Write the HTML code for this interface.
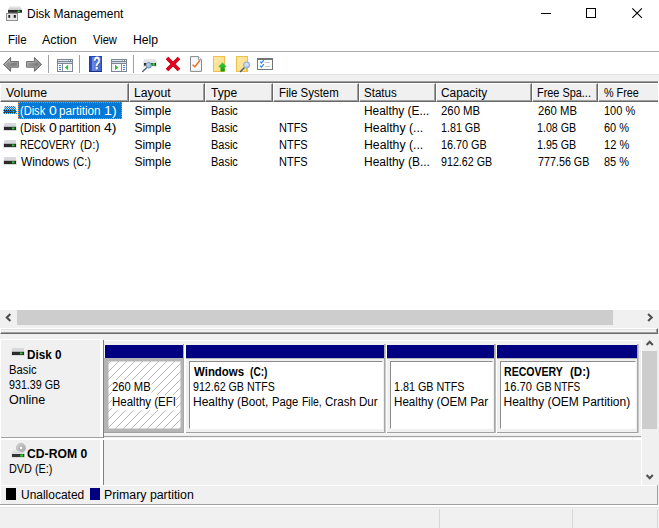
<!DOCTYPE html>
<html><head><meta charset="utf-8"><title>Disk Management</title>
<style>
*{box-sizing:border-box;margin:0;padding:0}
html,body{width:659px;height:528px;overflow:hidden;background:#fff}
body{position:relative;font-family:"Liberation Sans",sans-serif;font-size:12px;color:#000;line-height:15px}
.a{position:absolute}
.t{position:absolute;white-space:pre;transform-origin:0 0;height:15px}
.b{font-weight:bold}
.hc{position:absolute;top:83px;height:19px;background:#f0f0f0;border-top:1px solid #fff;border-left:1px solid #fff;border-bottom:1px solid #696969;border-right:1px solid #696969}
.hc:after{content:"";position:absolute;left:0;top:0;right:0;bottom:0;border-right:1px solid #a0a0a0;border-bottom:1px solid #a0a0a0}
.bar{position:absolute;top:345px;height:13px;background:#000080}
.pb{position:absolute;top:361px;height:68px;background:#fff;border:1px solid #8c8c8c;border-right-color:#fff;border-bottom-color:#fff}
.hl{border-right:none}.hl:after{border-right:none}
.vs{position:absolute;top:344px;height:89px;width:3px;background:#a8a8a8;border-right:2px solid #fff}
</style></head><body>
<!-- title bar -->
<svg class="a" style="left:5px;top:5px" width="18" height="17" viewBox="0 0 18 17">
<defs><linearGradient id="tg" x1="0" y1="0" x2="0" y2="1"><stop offset="0" stop-color="#f4f4f4"/><stop offset="1" stop-color="#c4c4c4"/></linearGradient></defs>
<path d="M4.6 1h10.6l1.8 4h-14z" fill="url(#tg)"/>
<rect x="3" y="5" width="14" height="2.8" fill="#2c2c2c"/>
<rect x="12.6" y="5.6" width="2" height="1.6" fill="#35e03a"/>
<rect x="1.5" y="8.5" width="11" height="7" fill="#e8e8e8" stroke="#909090" stroke-width="1"/>
<rect x="3.3" y="10" width="1.9" height="2.8" fill="#2c2c2c"/>
<rect x="8.7" y="10" width="2.2" height="2.8" fill="#2c2c2c"/>
</svg>
<svg class="a" style="left:530px;top:0" width="129" height="30" viewBox="0 0 129 30">
<path d="M11 13.5h10" stroke="#000" stroke-width="1"/>
<rect x="56.5" y="8.5" width="9" height="9" fill="none" stroke="#000" stroke-width="1"/>
<path d="M102.3 8.3l9.6 9.6M111.9 8.3l-9.6 9.6" stroke="#000" stroke-width="1.1"/>
</svg>
<!-- menu underline -->
<div class="a" style="left:0;top:51px;width:659px;height:1px;background:#aaa"></div>
<!-- toolbar -->
<svg class="a" id="tb" style="left:0;top:52px" width="300" height="22" viewBox="0 0 300 22">
<defs>
<linearGradient id="ag" x1="0" y1="0" x2="1" y2="1"><stop offset="0" stop-color="#b8b8b8"/><stop offset="0.6" stop-color="#7c7c7c"/><stop offset="1" stop-color="#9c9c9c"/></linearGradient>
<linearGradient id="hg" x1="0" y1="0" x2="1" y2="0"><stop offset="0" stop-color="#6a88e4"/><stop offset="1" stop-color="#4166d2"/></linearGradient>
<linearGradient id="yg" x1="0" y1="0" x2="1" y2="1"><stop offset="0" stop-color="#fee9a6"/><stop offset="1" stop-color="#fbdc84"/></linearGradient>
<linearGradient id="gg" x1="0" y1="0" x2="0" y2="1"><stop offset="0" stop-color="#2fd43a"/><stop offset="1" stop-color="#0a9c1a"/></linearGradient>
<radialGradient id="lg" cx="0.4" cy="0.35" r="0.7"><stop offset="0" stop-color="#dcebf8"/><stop offset="1" stop-color="#a4c0dc"/></radialGradient>
<radialGradient id="lg2" cx="0.4" cy="0.35" r="0.7"><stop offset="0" stop-color="#b8d2ea"/><stop offset="1" stop-color="#86a8c8"/></radialGradient>
</defs>
<!-- back / forward arrows -->
<path d="M3.4 12.4L10.6 5.5V9.6H18.4V15.2H10.6V19.3Z" fill="url(#ag)" stroke="#6c6c6c" stroke-width="1" stroke-linejoin="round"/>
<path d="M5.2 12.4L9.7 8V10.5H17.5V14.3H9.7V16.8Z" fill="none" stroke="#c8c8c8" stroke-width="0.6" stroke-opacity="0.7"/>
<path d="M41.6 12.4L34.4 5.5V9.6H26.6V15.2H34.4V19.3Z" fill="url(#ag)" stroke="#6c6c6c" stroke-width="1" stroke-linejoin="round"/>
<path d="M39.8 12.4L35.3 8V10.5H27.5V14.3H35.3V16.8Z" fill="none" stroke="#c8c8c8" stroke-width="0.6" stroke-opacity="0.7"/>
<rect x="48" y="3" width="1" height="18" fill="#a0a0a0"/>
<!-- show/hide tree -->
<rect x="57" y="7" width="16" height="13" fill="#7d8694"/>
<rect x="58" y="8" width="10.5" height="1" fill="#e2e6ec"/><rect x="69" y="8" width="1" height="1" fill="#fff"/><rect x="71" y="8" width="1" height="1" fill="#fff"/>
<rect x="58" y="10" width="14" height="1" fill="#d4d9e2"/>
<rect x="58" y="12" width="4" height="7" fill="#fff"/>
<rect x="59" y="13" width="2" height="1" fill="#3d7cd6"/><rect x="59" y="15" width="2" height="1" fill="#3d7cd6"/><rect x="59" y="17" width="2" height="1" fill="#3d7cd6"/>
<rect x="63" y="12" width="9" height="7" fill="#fff"/><rect x="69" y="12" width="2" height="7" fill="#f0f0f0"/>
<path d="M64.8 15.5L68.2 12.7V18.3Z" fill="#3cb83c"/>
<rect x="79" y="3" width="1" height="18" fill="#a0a0a0"/>
<!-- help -->
<rect x="89" y="4" width="13" height="16" fill="#2446b8"/>
<rect x="92" y="5" width="9" height="14" fill="url(#hg)"/>
<rect x="89" y="5" width="3" height="14" fill="#2a4cc0"/><rect x="89" y="5" width="1" height="14" fill="#1f3fa8"/>
<rect x="89" y="19" width="13" height="1" fill="#1a2f80"/>
<text transform="translate(97.3 17.6) scale(0.72 1.1)" font-family="Liberation Sans, sans-serif" font-size="15.5" fill="#1c3488" text-anchor="middle">?</text>
<text transform="translate(96.8 17.1) scale(0.72 1.1)" font-family="Liberation Sans, sans-serif" font-size="15.5" fill="#fff" stroke="#fff" stroke-width="0.7" text-anchor="middle">?</text>
<!-- tree 2 -->
<rect x="111" y="7" width="16" height="13" fill="#7d8694"/>
<rect x="112" y="8" width="10.5" height="1" fill="#e2e6ec"/><rect x="123" y="8" width="1" height="1" fill="#fff"/><rect x="125" y="8" width="1" height="1" fill="#fff"/>
<rect x="112" y="10" width="14" height="1" fill="#d4d9e2"/>
<rect x="112" y="12" width="9" height="7" fill="#fff"/><rect x="112" y="12" width="2" height="7" fill="#f0f0f0"/>
<path d="M118.4 15.5L115 12.7V18.3Z" fill="#3cb83c"/>
<rect x="122" y="12" width="4" height="7" fill="#fff"/>
<rect x="123" y="13" width="2" height="1" fill="#3d7cd6"/><rect x="123" y="15" width="2" height="1" fill="#3d7cd6"/><rect x="123" y="17" width="2" height="1" fill="#3d7cd6"/>
<rect x="133" y="3" width="1" height="18" fill="#a0a0a0"/>
<!-- rescan -->
<rect x="144" y="7" width="12" height="2.2" fill="#e4e6ea"/>
<rect x="143" y="9" width="14" height="5.8" fill="#dfe1e5"/>
<rect x="144" y="11" width="12" height="2.7" fill="#2c2c2c"/>
<rect x="152.4" y="11" width="2.4" height="2.7" rx="0.8" fill="#22dd22"/>
<circle cx="148.7" cy="13.3" r="2.8" fill="url(#lg2)" stroke="#7394b4" stroke-width="0.9"/>
<path d="M146.4 15.9L142.7 19.5" stroke="#50627a" stroke-width="1.4" stroke-linecap="round"/>
<!-- red X -->
<path d="M167 6L179 18M179 6L167 18" stroke="#b4000c" stroke-width="3.6"/>
<path d="M167.3 6.3L178.7 17.7M178.7 6.3L167.3 17.7" stroke="#e8001c" stroke-width="2.4"/>
<!-- page check -->
<path d="M190.5 4.6H198.4L201.5 7.7V19.4H190.5Z" fill="#f6f8fb" stroke="#8a8a8a" stroke-width="1"/>
<path d="M198.4 4.6V7.7H201.5" fill="#fff" stroke="#8a8a8a" stroke-width="0.9"/>
<path d="M192.5 12.8L194.8 14.8L200 8.4" fill="none" stroke="#f06a1a" stroke-width="1.5"/>
<!-- yellow page up -->
<rect x="213.5" y="4.5" width="11" height="15" fill="url(#yg)" stroke="#ecc04a" stroke-width="1"/>
<path d="M222.5 10.8L226.2 14.8H224.4V19.2H220.8V14.8H218.8Z" fill="url(#gg)" stroke="#12a81e" stroke-width="0.5"/>
<!-- yellow page magnifier -->
<rect x="236.5" y="4.5" width="11" height="15" fill="url(#yg)" stroke="#ecc04a" stroke-width="1"/>
<rect x="246" y="16" width="1" height="3.5" fill="#ecc04a"/>
<path d="M244.2 15.8L240.6 19.5" stroke="#44607c" stroke-width="1.5" stroke-linecap="round"/>
<circle cx="246.7" cy="13" r="3.1" fill="url(#lg)" stroke="#8ca4c0" stroke-width="0.9"/>
<!-- checklist -->
<rect x="257" y="6" width="16" height="12" fill="#70767c"/>
<rect x="258" y="8" width="14" height="9" fill="#fff"/>
<path d="M260 9.6l1.4 1.5 2.4-3M260 13.6l1.4 1.5 2.4-3" fill="none" stroke="#2b8ce8" stroke-width="1.3"/>
<rect x="265" y="10" width="5" height="1" fill="#c4c4c4"/><rect x="265" y="14" width="5" height="1" fill="#c4c4c4"/>
</svg>
<!-- band under toolbar -->
<div class="a" style="left:0;top:74px;width:659px;height:7px;background:#f0f0f0"></div>
<div class="a" style="left:0;top:74px;width:659px;height:1px;background:#e3e3e3"></div>
<div class="a" style="left:0;top:81px;width:658px;height:1px;background:#a0a0a0"></div>
<div class="a" style="left:0;top:82px;width:658px;height:1px;background:#696969"></div>
<!-- header cells -->
<div class="hc" style="left:0;width:129px"></div>
<div class="hc" style="left:129px;width:76px"></div>
<div class="hc" style="left:205px;width:68px"></div>
<div class="hc" style="left:273px;width:86px"></div>
<div class="hc" style="left:359px;width:77px"></div>
<div class="hc" style="left:436px;width:96px"></div>
<div class="hc" style="left:532px;width:66px"></div>
<div class="hc hl" style="left:598px;width:60px"></div>
<!-- selection -->
<div class="a" style="left:18px;top:102px;width:104px;height:17px;background:#0078d7;border:1px dotted #ff8728"></div>
<!-- row icons -->
<svg class="a" style="left:3px;top:106px" width="14" height="8" viewBox="0 0 14 8">
<defs><pattern id="dz" width="2" height="2" patternUnits="userSpaceOnUse"><rect width="1" height="1" fill="#0078d7"/><rect x="1" y="1" width="1" height="1" fill="#0078d7"/></pattern>
<clipPath id="dc"><path d="M2 0H12L13.2 4H13.8V8H0.2V4H0.8Z"/></clipPath></defs>
<path d="M1.3 0H12.7L13.4 4H0.6Z" fill="#d6d8dc"/><rect x="0.2" y="3.5" width="13.6" height="4.5" fill="#d8dade"/><rect x="1" y="3.8" width="12" height="3.2" fill="#2c2c2c"/><rect x="9" y="4.5" width="2.4" height="1.8" fill="#28d828"/><rect width="14" height="8" fill="url(#dz)" clip-path="url(#dc)"/>
</svg>
<svg class="a" style="left:3px;top:123px" width="14" height="8" viewBox="0 0 14 8"><path d="M1.3 0H12.7L13.4 4H0.6Z" fill="#d6d8dc"/><rect x="0.2" y="3.5" width="13.6" height="4.5" fill="#d8dade"/><rect x="1" y="3.8" width="12" height="3.2" fill="#2c2c2c"/><rect x="9" y="4.5" width="2.4" height="1.8" fill="#28d828"/></svg>
<svg class="a" style="left:3px;top:140px" width="14" height="8" viewBox="0 0 14 8"><path d="M1.3 0H12.7L13.4 4H0.6Z" fill="#d6d8dc"/><rect x="0.2" y="3.5" width="13.6" height="4.5" fill="#d8dade"/><rect x="1" y="3.8" width="12" height="3.2" fill="#2c2c2c"/><rect x="9" y="4.5" width="2.4" height="1.8" fill="#28d828"/></svg>
<svg class="a" style="left:3px;top:157px" width="14" height="8" viewBox="0 0 14 8"><path d="M1.3 0H12.7L13.4 4H0.6Z" fill="#d6d8dc"/><rect x="0.2" y="3.5" width="13.6" height="4.5" fill="#d8dade"/><rect x="1" y="3.8" width="12" height="3.2" fill="#2c2c2c"/><rect x="9" y="4.5" width="2.4" height="1.8" fill="#28d828"/></svg>
<!-- h scroll -->
<div class="a" style="left:0;top:310px;width:659px;height:18px;background:#f0f0f0"></div>
<div class="a" style="left:17px;top:310px;width:596px;height:15px;background:#cdcdcd"></div>
<svg class="a" style="left:0;top:310px" width="659" height="15" viewBox="0 0 659 15"><path d="M10.4 4.1L6.8 7.5L10.4 10.9" fill="none" stroke="#505050" stroke-width="2.1"/><path d="M648.1 4.1L651.7 7.5L648.1 10.9" fill="none" stroke="#505050" stroke-width="2.1"/></svg>
<!-- splitter -->
<div class="a" style="left:0;top:328px;width:658px;height:6px;background:#f0f0f0;border-top:1px solid #fff;border-left:1px solid #fff;border-right:1px solid #696969;border-bottom:1px solid #696969"></div>
<div class="a" style="left:1px;top:332px;width:656px;height:1px;background:#a0a0a0"></div>
<div class="a" style="left:1px;top:329px;width:655px;height:1px;background:#e3e3e3"></div>
<div class="a" style="left:656px;top:329px;width:1px;height:4px;background:#a0a0a0"></div>
<div class="a" style="left:658px;top:328px;width:1px;height:6px;background:#f0f0f0"></div>
<!-- bottom panel -->
<div class="a" style="left:0;top:334px;width:659px;height:194px;background:#f0f0f0"></div>
<div class="a" style="left:0;top:339px;width:103px;height:1px;background:#fff"></div>
<div class="a" style="left:104px;top:340px;width:538px;height:1px;background:#fff"></div>
<div class="a" style="left:0;top:339px;width:1px;height:146px;background:#fff"></div>
<div class="a" style="left:641px;top:339px;width:1px;height:146px;background:#fff"></div>
<div class="a" style="left:100px;top:340px;width:3px;height:145px;background:#fff"></div>
<div class="a" style="left:103px;top:340px;width:1px;height:145px;background:#808080"></div>
<!-- disk row sep -->
<div class="a" style="left:104px;top:432px;width:535px;height:1px;background:#a0a0a0"></div>
<div class="a" style="left:104px;top:433px;width:535px;height:1px;background:#f7f7f7"></div>
<div class="a" style="left:1px;top:437px;width:102px;height:1px;background:#a0a0a0"></div>
<div class="a" style="left:104px;top:436px;width:537px;height:1px;background:#a0a0a0"></div>
<div class="a" style="left:1px;top:438px;width:640px;height:2px;background:#fff"></div>
<div class="a" style="left:103px;top:438px;width:1px;height:2px;background:#fff"></div>
<!-- disk icon -->
<svg class="a" style="left:11px;top:348px" width="14" height="9" viewBox="0 0 14 9"><path d="M1.3 0H12.7L13.4 4H0.6Z" fill="#d6d8dc"/><rect x="0.2" y="3.5" width="13.6" height="4.5" fill="#d8dade"/><rect x="1" y="3.8" width="12" height="3.2" fill="#2c2c2c"/><rect x="9" y="4.5" width="2.4" height="1.8" fill="#28d828"/></svg>
<!-- partition bars -->
<div class="bar" style="left:105px;width:78px"></div>
<div class="bar" style="left:186px;width:198px"></div>
<div class="bar" style="left:387px;width:107px"></div>
<div class="bar" style="left:497px;width:140px"></div>
<!-- cell separators -->
<div class="vs" style="left:183px"></div>
<div class="vs" style="left:384px"></div><div class="a" style="left:385px;top:344px;width:1px;height:89px;background:#c8c8c8"></div>
<div class="vs" style="left:494px"></div><div class="a" style="left:495px;top:344px;width:1px;height:89px;background:#bcbcbc"></div>
<div class="a" style="left:637px;top:344px;width:1px;height:89px;background:#a8a8a8"></div><div class="a" style="left:638px;top:344px;width:1px;height:89px;background:#c8c8c8"></div>
<div class="a" style="left:186px;top:358px;width:198px;height:1px;background:#b4b4b4"></div>
<div class="a" style="left:387px;top:358px;width:107px;height:1px;background:#b4b4b4"></div>
<div class="a" style="left:497px;top:358px;width:140px;height:1px;background:#b4b4b4"></div>
<!-- partition 1 (selected, hatched) -->
<svg class="a" style="left:104px;top:358px" width="79" height="74" viewBox="0 0 79 74">
<defs><pattern id="ht" width="8" height="8" patternUnits="userSpaceOnUse" x="1" y="1"><rect width="8" height="8" fill="#fff"/><path d="M-1 9L9 -1M-1 1L1 -1M7 9L9 7" stroke="#9c9c9c" stroke-width="0.7"/></pattern></defs>
<rect width="79" height="74" fill="#b4b4b4"/>
<rect x="4.5" y="3.5" width="72" height="67" fill="url(#ht)"/>
<rect x="8" y="22" width="39.5" height="15" fill="#fff"/><rect x="8" y="37" width="64" height="15" fill="#fff"/>
</svg>
<div class="pb" style="left:189px;width:194px"></div>
<div class="pb" style="left:390px;width:103px"></div>
<div class="pb" style="left:500px;width:136px"></div>
<!-- cd icon -->
<svg class="a" style="left:11px;top:442px" width="16" height="17" viewBox="0 0 16 17">
<defs><linearGradient id="cdg" x1="0" y1="0" x2="1" y2="1"><stop offset="0" stop-color="#d8d8d8"/><stop offset="1" stop-color="#a4a4a4"/></linearGradient></defs>
<circle cx="10" cy="5.9" r="4.6" fill="url(#cdg)" stroke="#b4b4b4" stroke-width="0.7"/>
<circle cx="10" cy="5.9" r="1.9" fill="#fff" stroke="#909090" stroke-width="0.7"/>
<path d="M1.6 8.6H6.4Q10 11.4 13 9.6L13.4 12H0.8Z" fill="#dcdee2"/>
<rect x="0.4" y="11.6" width="13.4" height="4.2" fill="#d8dade"/>
<rect x="1" y="12" width="12.2" height="3" fill="#343434"/>
<rect x="9.2" y="12.4" width="3" height="2.2" fill="#28d828"/>
</svg>
<!-- v scroll -->
<div class="a" style="left:642px;top:339px;width:15px;height:146px;background:#f0f0f0"></div>
<div class="a" style="left:642px;top:351px;width:15px;height:78px;background:#cdcdcd"></div>
<svg class="a" style="left:642px;top:339px" width="15" height="146" viewBox="0 0 15 146"><path d="M4.6 6L7.7 2.7L10.8 6" fill="none" stroke="#505050" stroke-width="2.1"/><path d="M4.6 136L7.7 139.3L10.8 136" fill="none" stroke="#505050" stroke-width="2.1"/></svg>
<!-- legend -->
<div class="a" style="left:0;top:485px;width:657px;height:1px;background:#fff"></div>
<div class="a" style="left:0;top:485px;width:1px;height:19px;background:#fff"></div>
<div class="a" style="left:6px;top:488px;width:10px;height:12px;background:#000"></div>
<div class="a" style="left:90px;top:488px;width:10px;height:12px;background:#000080"></div>
<div class="a" style="left:0;top:504px;width:658px;height:1px;background:#a0a0a0"></div>
<div class="a" style="left:657px;top:485px;width:1px;height:20px;background:#a0a0a0"></div>
<!-- status bar -->
<div class="a" style="left:0;top:505px;width:659px;height:2px;background:#fff"></div>
<div class="a" style="left:0;top:507px;width:659px;height:1px;background:#e4e4e4"></div>
<div class="a" style="left:439px;top:509px;width:1px;height:19px;background:#d7d7d7"></div>
<div class="a" style="left:572px;top:509px;width:1px;height:19px;background:#d7d7d7"></div>
<div class="a" style="left:657px;top:509px;width:1px;height:19px;background:#d7d7d7"></div>
<div class="t" style="left:26.50px;top:7px;transform:scaleX(0.9966)">Disk Management</div>
<div class="t" style="left:7.79px;top:33px;transform:scaleX(0.9577)">File</div>
<div class="t" style="left:42.37px;top:33px;transform:scaleX(1.0385)">Action</div>
<div class="t" style="left:93.13px;top:33px;transform:scaleX(0.9268)">View</div>
<div class="t" style="left:133.48px;top:33px;transform:scaleX(1.0162)">Help</div>
<div class="t" style="left:6.12px;top:86px;transform:scaleX(1.0286)">Volume</div>
<div class="t" style="left:133.98px;top:86px;transform:scaleX(1.0179)">Layout</div>
<div class="t" style="left:210.75px;top:86px;transform:scaleX(1.0020)">Type</div>
<div class="t" style="left:278.55px;top:86px;transform:scaleX(0.9528)">File System</div>
<div class="t" style="left:364.40px;top:86px;transform:scaleX(0.9621)">Status</div>
<div class="t" style="left:441.38px;top:86px;transform:scaleX(0.9891)">Capacity</div>
<div class="t" style="left:537.34px;top:86px;transform:scaleX(0.9083)">Free Spa...</div>
<div class="t" style="left:604.16px;top:86px;transform:scaleX(0.9007)">% Free</div>
<div class="t" style="left:20.01px;top:104px;transform:scaleX(0.9202);color:#fff">(Disk</div>
<div class="t" style="left:48.82px;top:104px;transform:scaleX(1.1652);color:#fff">0</div>
<div class="t" style="left:59.47px;top:104px;transform:scaleX(0.9751);color:#fff">partition</div>
<div class="t" style="left:103.86px;top:104px;transform:scaleX(1.1889);color:#fff">1)</div>
<div class="t" style="left:134.38px;top:104px;transform:scaleX(1.0000)">Simple</div>
<div class="t" style="left:210.99px;top:104px;transform:scaleX(0.9143)">Basic</div>
<div class="t" style="left:364.01px;top:104px;transform:scaleX(0.9902)">Healthy (E...</div>
<div class="t" style="left:441.41px;top:104px;transform:scaleX(0.9470)">260 MB</div>
<div class="t" style="left:537.66px;top:104px;transform:scaleX(0.9408)">260 MB</div>
<div class="t" style="left:603.70px;top:104px;transform:scaleX(0.9160)">100 %</div>
<div class="t" style="left:20.01px;top:121px;transform:scaleX(0.9202)">(Disk</div>
<div class="t" style="left:48.82px;top:121px;transform:scaleX(1.1652)">0</div>
<div class="t" style="left:59.47px;top:121px;transform:scaleX(0.9751)">partition</div>
<div class="t" style="left:104.21px;top:121px;transform:scaleX(1.1636)">4)</div>
<div class="t" style="left:134.38px;top:121px;transform:scaleX(1.0000)">Simple</div>
<div class="t" style="left:210.99px;top:121px;transform:scaleX(0.9143)">Basic</div>
<div class="t" style="left:278.59px;top:121px;transform:scaleX(0.9143)">NTFS</div>
<div class="t" style="left:363.98px;top:121px;transform:scaleX(1.0201)">Healthy (...</div>
<div class="t" style="left:441.22px;top:121px;transform:scaleX(0.8941)">1.81 GB</div>
<div class="t" style="left:537.47px;top:121px;transform:scaleX(0.8882)">1.08 GB</div>
<div class="t" style="left:603.93px;top:121px;transform:scaleX(0.9143)">60 %</div>
<div class="t" style="left:20.17px;top:138px;transform:scaleX(0.8304)">RECOVERY</div>
<div class="t" style="left:79.58px;top:138px;transform:scaleX(0.9622)">(D:)</div>
<div class="t" style="left:134.38px;top:138px;transform:scaleX(1.0000)">Simple</div>
<div class="t" style="left:210.99px;top:138px;transform:scaleX(0.9143)">Basic</div>
<div class="t" style="left:278.59px;top:138px;transform:scaleX(0.9143)">NTFS</div>
<div class="t" style="left:363.98px;top:138px;transform:scaleX(1.0201)">Healthy (...</div>
<div class="t" style="left:441.21px;top:138px;transform:scaleX(0.9008)">16.70 GB</div>
<div class="t" style="left:537.47px;top:138px;transform:scaleX(0.8882)">1.95 GB</div>
<div class="t" style="left:603.69px;top:138px;transform:scaleX(0.9231)">12 %</div>
<div class="t" style="left:20.88px;top:155px;transform:scaleX(0.9891)">Windows</div>
<div class="t" style="left:72.94px;top:155px;transform:scaleX(0.8865)">(C:)</div>
<div class="t" style="left:134.38px;top:155px;transform:scaleX(1.0000)">Simple</div>
<div class="t" style="left:210.99px;top:155px;transform:scaleX(0.9143)">Basic</div>
<div class="t" style="left:278.59px;top:155px;transform:scaleX(0.9143)">NTFS</div>
<div class="t" style="left:364.00px;top:155px;transform:scaleX(0.9980)">Healthy (B...</div>
<div class="t" style="left:441.44px;top:155px;transform:scaleX(0.8909)">912.62 GB</div>
<div class="t" style="left:537.69px;top:155px;transform:scaleX(0.8953)">777.56 GB</div>
<div class="t" style="left:604.05px;top:155px;transform:scaleX(0.9100)">85 %</div>
<div class="t b" style="left:26.77px;top:348px;transform:scaleX(0.9744)">Disk 0</div>
<div class="t" style="left:8.56px;top:363px;transform:scaleX(0.9375)">Basic</div>
<div class="t" style="left:8.94px;top:378px;transform:scaleX(0.8909)">931.39 GB</div>
<div class="t" style="left:8.85px;top:393px;transform:scaleX(1.0448)">Online</div>
<div class="t" style="left:111.92px;top:380px;transform:scaleX(0.9346)">260 MB</div>
<div class="t" style="left:111.54px;top:395px;transform:scaleX(0.9594)">Healthy (EFI</div>
<div class="t b" style="left:193.80px;top:365px;transform:scaleX(0.9538)">Windows</div>
<div class="t b" style="left:250.47px;top:365px;transform:scaleX(0.8465)">(C:)</div>
<div class="t" style="left:193.19px;top:380px;transform:scaleX(0.8886)">912.62 GB NTFS</div>
<div class="t" style="left:192.80px;top:395px;transform:scaleX(1.0019)">Healthy</div>
<div class="t" style="left:237.37px;top:395px;transform:scaleX(0.9785)">(Boot,</div>
<div class="t" style="left:272.16px;top:395px;transform:scaleX(0.9396)">Page</div>
<div class="t" style="left:301.73px;top:395px;transform:scaleX(0.8679)">File,</div>
<div class="t" style="left:325.30px;top:395px;transform:scaleX(0.9633)">Crash</div>
<div class="t" style="left:359.33px;top:395px;transform:scaleX(0.9655)">Dur</div>
<div class="t" style="left:393.72px;top:380px;transform:scaleX(0.8964)">1.81 GB NTFS</div>
<div class="t" style="left:393.53px;top:395px;transform:scaleX(0.9675)">Healthy (OEM Par</div>
<div class="t b" style="left:504.04px;top:365px;transform:scaleX(0.8805)">RECOVERY</div>
<div class="t b" style="left:569.50px;top:365px;transform:scaleX(0.9652)">(D:)</div>
<div class="t" style="left:504.49px;top:380px;transform:scaleX(0.9293)">16.70</div>
<div class="t" style="left:535.94px;top:380px;transform:scaleX(0.8992)">GB</div>
<div class="t" style="left:553.96px;top:380px;transform:scaleX(0.8370)">NTFS</div>
<div class="t" style="left:503.50px;top:395px;transform:scaleX(1.0000)">Healthy (OEM Partition)</div>
<div class="t b" style="left:26.79px;top:447px;transform:scaleX(1.0141)">CD-ROM 0</div>
<div class="t" style="left:8.79px;top:462px;transform:scaleX(0.9059)">DVD (E:)</div>
<div class="t" style="left:21.03px;top:488px;transform:scaleX(0.9976)">Unallocated</div>
<div class="t" style="left:104.27px;top:488px;transform:scaleX(1.0277)">Primary partition</div>
</body></html>
